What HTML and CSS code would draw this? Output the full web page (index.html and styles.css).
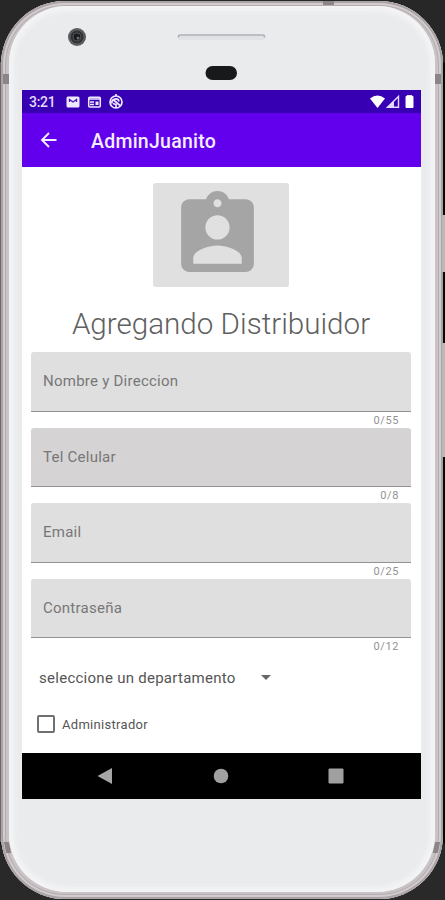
FILE: index.html
```html
<!DOCTYPE html>
<html lang="es">
<head>
    <meta charset="UTF-8">
    <title>AdminJuanito</title>
    <link rel="stylesheet" href="styles.css">
</head>
<body>
    <div class="phone">
        <span class="button power"></span>
        <span class="button volume"></span>
        <span class="antenna antenna-top"></span>
        <span class="antenna antenna-left"></span>
        <span class="antenna antenna-right"></span>
        <span class="antenna antenna-bottom-left"></span>
        <span class="antenna antenna-bottom-right"></span>
        <div class="face">
            <svg class="hardware" width="399" height="84" viewBox="22 6 399 84">
                <circle cx="77" cy="37" r="9" fill="#5a5d60"/>
                <circle cx="77" cy="37" r="6.5" fill="#303235"/>
                <circle cx="77" cy="37" r="4" fill="#18191b" stroke="#505356"/>
                <circle cx="78" cy="38" r="1.5" fill="#686b6e"/>
                <rect x="178" y="34" width="87" height="6" rx="2" fill="#e0e2e5"/>
                <path d="M178.500 37.500v-1q0-1.500 2-1.500h82q2 0 2 1.500v1" fill="none" stroke="#b0b3b8" stroke-width="1.600"/>
                <rect x="205.500" y="66" width="31.500" height="14" rx="7" fill="#17191b"/>
            </svg>
            <div class="screen">
                <div class="statusbar">
                    <span class="clock">3:21</span>
                    <svg class="notifications" width="60" height="16" viewBox="0 0 60 16">
                        <rect x="1.500" y="2.500" width="13" height="11" rx="1.500" fill="#eee9ff"/>
                        <path d="M4.500 8V5.500l3.500 2.500 3.500-2.500V8" fill="none" stroke="#4a1bb8" stroke-width="1.300"/>
                        <rect x="23.700" y="3.200" width="11.600" height="9.800" rx="1" fill="none" stroke="#eee9ff" stroke-width="1.500"/>
                        <path d="M23.500 5h12M25 8h4M25 10.500h4" stroke="#eee9ff" stroke-width="1.500"/>
                        <rect x="30.500" y="7.500" width="3" height="3.500" fill="#eee9ff"/>
                        <circle cx="51" cy="8" r="6" fill="none" stroke="#eee9ff" stroke-width="1.700"/>
                        <path d="M47 9.500c-1-5 6-6 7-2M48 5.500l7 6M51 14V10.500l-3-1M51 2V0" fill="none" stroke="#eee9ff" stroke-width="1.700"/>
                    </svg>
                    <svg class="signals" width="46" height="16" viewBox="0 0 46 16">
                        <path d="M0 4.500Q7.500-1.300 15 4.500L7.500 14z" fill="#fff"/>
                        <path d="M17.500 13.200L28.500 2.500v10.700z" fill="none" stroke="#e2daff" stroke-width="1.400"/>
                        <path d="M17 13.500L24 7v6.500z" fill="#e2daff"/>
                        <path d="M36 2.500h1V1.700h5v.8h1v11h-7z" fill="#fff" stroke="#fff" stroke-width="1" stroke-linejoin="round"/>
                    </svg>
                </div>
                <div class="appbar">
                    <svg class="back" width="18" height="18" viewBox="0 0 18 18">
                        <path d="M16.500 9H2.500M9 2L2 9l7 7" fill="none" stroke="#f4eeff" stroke-width="1.900"/>
                    </svg>
                    <h1>AdminJuanito</h1>
                </div>
                <div class="content">
                    <div class="photo">
                        <svg width="97" height="97" viewBox="0 0 24 24">
                            <path fill="#a5a5a5" d="M19 3h-4.180C14.400 1.840 13.300 1 12 1c-1.300 0-2.400.84-2.820 2H5c-1.100 0-2 .9-2 2v14c0 1.100.9 2 2 2h14c1.100 0 2-.9 2-2V5c0-1.100-.9-2-2-2zm-7 0c.55 0 1 .45 1 1s-.45 1-1 1-1-.45-1-1 .45-1 1-1zm0 4c1.660 0 3 1.340 3 3s-1.340 3-3 3-3-1.340-3-3 1.340-3 3-3zm6 12H6v-1.400c0-2 4-3.100 6-3.100s6 1.100 6 3.100V19z"/>
                        </svg>
                    </div>
                    <h2>Agregando Distribuidor</h2>
                    <div class="field">
                        <div class="input">Nombre y Direccion</div>
                        <div class="counter">0/55</div>
                    </div>
                    <div class="field">
                        <div class="input hovered">Tel Celular</div>
                        <div class="counter">0/8</div>
                    </div>
                    <div class="field">
                        <div class="input">Email</div>
                        <div class="counter">0/25</div>
                    </div>
                    <div class="field">
                        <div class="input">Contraseña</div>
                        <div class="counter">0/12</div>
                    </div>
                    <div class="spinner">
                        <span>seleccione un departamento</span>
                        <i class="arrow"></i>
                    </div>
                    <div class="check">
                        <i class="box"></i>
                        <span>Administrador</span>
                    </div>
                </div>
                <div class="navbar">
                    <svg width="399" height="46" viewBox="0 0 399 46">
                        <path d="M75.500 23L90 15v16z" fill="#a5a5a5"/>
                        <circle cx="199" cy="23" r="7.300" fill="#a0a0a0"/>
                        <rect x="306.500" y="15.500" width="15" height="15" rx="1" fill="#a0a0a0"/>
                    </svg>
                </div>
            </div>
        </div>
    </div>
</body>
</html>
```

FILE: styles.css
```css
body {
    margin: 0;
    height: 900px;
    overflow: hidden;
    background:
        linear-gradient(#6f686b, #6f686b) 0 62px / 2px 780px no-repeat,
        linear-gradient(#272727 0, #272727 62px, #080808 63px, #080808 842px, #292929 846px);
    font-family: Roboto, "Liberation Sans", sans-serif;
}
.phone {
    position: relative;
    box-sizing: border-box;
    width: 442px;
    height: 898px;
    margin: 1px;
    padding: 5px 8px 7px;
    border-radius: 64px;
    background: #c9c3c6;
    box-shadow: inset 0 0 0 2px #aaa3a6, inset 0 0 0 4px #d2cccf, inset 0 0 0 5px #b4aeb1;
}
.face {
    box-sizing: border-box;
    height: 886px;
    padding: 0 13px;
    border-radius: 58px;
    background: #e9ebed;
    box-shadow: inset 0 0 5px 5px #f4f4f6;
}
.hardware {
    display: block;
}

/* side buttons and antenna lines */
.button {
    position: absolute;
    left: 441px;
    width: 4px;
    background: #bdb9b9;
}
.power {
    top: 214px;
    height: 57px;
}
.volume {
    top: 342px;
    height: 114px;
}
.antenna {
    position: absolute;
    background: #8b8588;
}
.antenna-top {
    top: 0;
    left: 322px;
    width: 11px;
    height: 4px;
}
.antenna-left,
.antenna-right {
    top: 73px;
    width: 6px;
    height: 10px;
}
.antenna-left {
    left: 2px;
}
.antenna-right {
    right: 2px;
}
.antenna-bottom-left,
.antenna-bottom-right {
    top: 841px;
    width: 5px;
    height: 11px;
}
.antenna-bottom-left {
    left: 4px;
    transform: skewX(12deg);
}
.antenna-bottom-right {
    right: 4px;
    transform: skewX(-12deg);
}

.screen {
    width: 399px;
    height: 709px;
    background: #fff;
}
.statusbar {
    display: flex;
    align-items: center;
    box-sizing: border-box;
    height: 23px;
    padding: 0 7px;
    background: #3700b3;
}
.clock {
    width: 36px;
    color: #e2dafa;
    font-size: 14px;
    font-weight: 500;
    letter-spacing: -0.3px;
}
.signals {
    margin-left: auto;
    margin-right: -2px;
}
.appbar {
    display: flex;
    align-items: center;
    height: 54px;
    padding-left: 18px;
    background: #6200ee;
}
.appbar h1 {
    margin: 3px 0 0 33px;
    color: #f4eeff;
    font-size: 19.5px;
    font-weight: 500;
    letter-spacing: 0.25px;
}
.content {
    box-sizing: border-box;
    height: 586px;
    padding: 16px 10px 0 9px;
}
.photo {
    display: flex;
    justify-content: center;
    width: 136px;
    height: 104px;
    margin: 0 auto;
    border-radius: 3px;
    background: #e0e0e0;
}
.photo svg {
    margin: 4px 8px 0 0;
}
h2 {
    margin: 20px 0 11px;
    color: #606060;
    font-size: 29.6px;
    font-weight: 300;
    line-height: 34px;
    text-align: center;
    white-space: nowrap;
}
.field {
    height: 75.5px;
}
.input {
    box-sizing: border-box;
    height: 59.5px;
    padding-left: 12px;
    border-bottom: 1px solid #929292;
    border-radius: 3px 3px 0 0;
    background: #dfdfdf;
    color: #777;
    font-size: 15px;
    letter-spacing: 0.25px;
    line-height: 59px;
}
.hovered {
    background: #d5d3d4;
}
.counter {
    padding-right: 12px;
    color: #929292;
    font-size: 11px;
    letter-spacing: 0.6px;
    line-height: 17px;
    text-align: right;
}
.spinner {
    display: flex;
    align-items: center;
    height: 47px;
    padding-left: 8px;
    color: #555;
    font-size: 15px;
    letter-spacing: 0.27px;
}
.arrow {
    margin-left: 25px;
    border: 5px solid transparent;
    border-top-color: #666;
    border-bottom: 0;
}
.check {
    display: flex;
    align-items: center;
    height: 46px;
    padding-left: 6px;
    color: #555;
    font-size: 13px;
    letter-spacing: 0.3px;
}
.box {
    box-sizing: border-box;
    width: 18px;
    height: 18px;
    margin-right: 7px;
    border: 2px solid #707070;
    border-radius: 2px;
}
.navbar {
    height: 46px;
    background: #000;
}
.navbar svg {
    display: block;
}
```
